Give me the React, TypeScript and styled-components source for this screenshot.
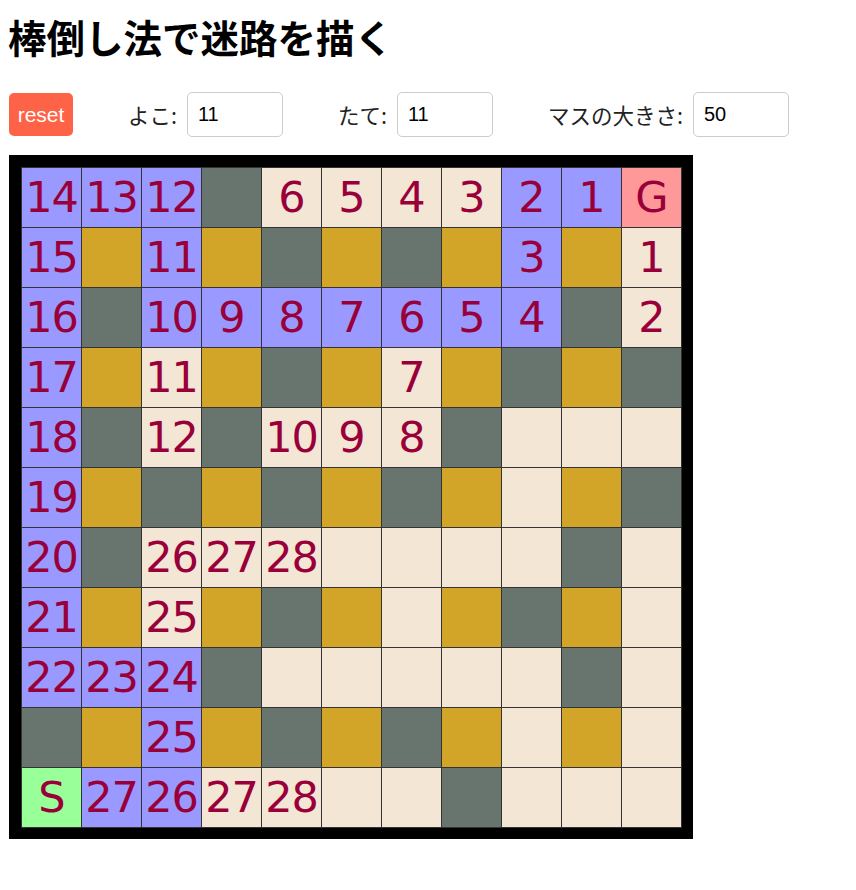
import React from "react";
import styled, { createGlobalStyle } from "styled-components";

const GlobalStyle = createGlobalStyle`
  html, body { margin: 0; padding: 0; background: #fff; }
  body { margin: 8px; font-family: "Noto Sans CJK JP", "Noto Sans", sans-serif; color: #000; }
`;

const Title = styled.h1`
  margin: 0;
  padding-top: 4px;
  font-size: 38.5px;
  line-height: 48px;
  font-weight: 700;
  font-family: "Noto Sans CJK JP", sans-serif;
`;

const Controls = styled.div`
  display: flex;
  align-items: center;
  margin-top: 32px;
  height: 45px;
`;

const ResetButton = styled.button`
  width: 64px;
  height: 43px;
  margin-left: 1px;
  border: none;
  border-radius: 5px;
  background: #ff6347;
  color: #fff;
  font-family: "Liberation Sans", Arial, sans-serif;
  font-size: 21px;
  padding: 0;
  cursor: pointer;
`;

const Label = styled.label`
  display: flex;
  align-items: center;
  margin-left: 55px;
  font-size: 21.5px;
  font-family: "Noto Sans CJK JP", sans-serif;
  color: #222;
  gap: 10px;
`;

const NumInput = styled.input`
  box-sizing: border-box;
  width: 96px;
  height: 45px;
  border: 1px solid #ccc;
  border-radius: 5px;
  padding: 0 10px;
  font-family: "Liberation Sans", Arial, sans-serif;
  font-size: 20px;
  color: #000;
  outline: none;
`;

const Board = styled.div`
  display: inline-grid;
  grid-template-columns: repeat(11, 60px);
  grid-auto-rows: 60px;
  padding: 12px;
  background: #000;
  margin-top: 18px;
  margin-left: 1px;
`;

type Kind = "P" | "C" | "X" | "Y" | "S" | "G";

const colors: Record<Kind, string> = {
  P: "#9999ff",
  C: "#f3e6d5",
  X: "#68756f",
  Y: "#d2a528",
  S: "#99ff99",
  G: "#ff9999",
};

const Cell = styled.div<{ $kind: Kind }>`
  box-sizing: border-box;
  border: 1px solid #333;
  margin: 0 -1px -1px 0;
  background: ${(p) => colors[p.$kind]};
  color: #99003a;
  font-family: "DejaVu Sans", Verdana, sans-serif;
  font-size: 43px;
  line-height: 58px;
  text-align: center;
  white-space: nowrap;
  overflow: visible;
  letter-spacing: -1px;
`;

const rows: string[] = [
  "P14 P13 P12 X C6 C5 C4 C3 P2 P1 GG",
  "P15 Y P11 Y X Y X Y P3 Y C1",
  "P16 X P10 P9 P8 P7 P6 P5 P4 X C2",
  "P17 Y C11 Y X Y C7 Y X Y X",
  "P18 X C12 X C10 C9 C8 X C C C",
  "P19 Y X Y X Y X Y C Y X",
  "P20 X C26 C27 C28 C C C C X C",
  "P21 Y C25 Y X Y C Y X Y C",
  "P22 P23 P24 X C C C C C X C",
  "X Y P25 Y X Y X Y C Y C",
  "SS P27 P26 C27 C28 C C X C C C",
];

const cells = rows.flatMap((r) =>
  r.split(" ").map((t) => ({ kind: t[0] as Kind, text: t.slice(1) }))
);

export default function App() {
  return (
    <>
      <GlobalStyle />
      <Title>棒倒し法で迷路を描く</Title>
      <Controls>
        <ResetButton>reset</ResetButton>
        <Label>
          よこ:
          <NumInput type="text" defaultValue="11" />
        </Label>
        <Label>
          たて:
          <NumInput type="text" defaultValue="11" />
        </Label>
        <Label>
          マスの大きさ:
          <NumInput type="text" defaultValue="50" />
        </Label>
      </Controls>
      <Board>
        {cells.map((c, i) => (
          <Cell key={i} $kind={c.kind}>
            {c.text}
          </Cell>
        ))}
      </Board>
    </>
  );
}
